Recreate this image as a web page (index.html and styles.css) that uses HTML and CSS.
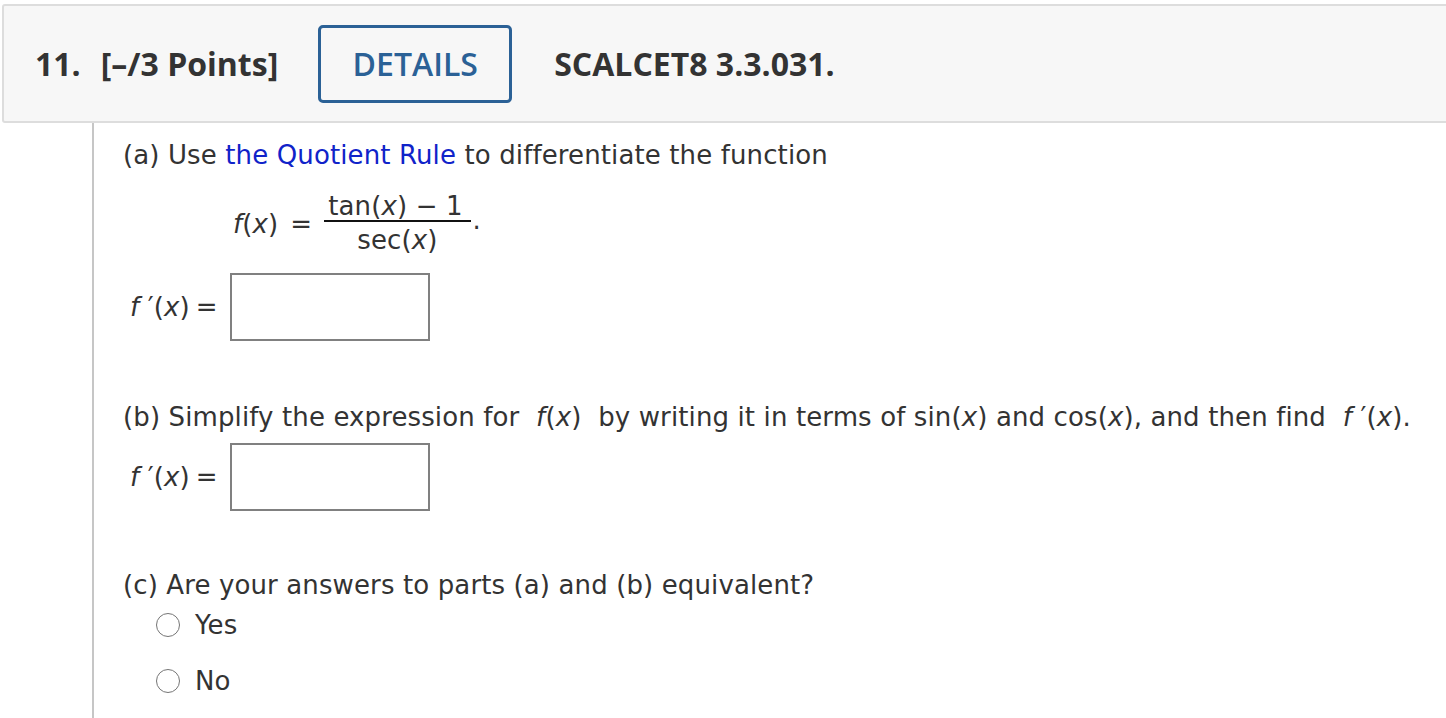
FILE: index.html
```html
<!DOCTYPE html>
<html>
<head>
<meta charset="utf-8">
<link rel="stylesheet" href="styles.css">
</head>
<body>
<div class="question">
  <div class="qhead">
    <span class="qnum">11.</span>
    <span class="qpts">[–/3 Points]</span>
    <span class="details">DETAILS</span>
    <span class="qid">SCALCET8 3.3.031.</span>
  </div>
  <div class="qbody">
    <p class="line line-a">(a) Use <span class="link">the Quotient Rule</span> to differentiate the function</p>
    <div class="eq">
      <span class="lhs"><i>f</i>(<i>x</i>)</span>
      <span class="op">=</span>
      <span class="frac"><span class="num">tan(<i>x</i>) − 1</span><span class="den">sec(<i>x</i>)</span></span><span class="dot">.</span>
    </div>
    <div class="answer answer-a">
      <span class="lab"><i>f</i> ′(<i>x</i>)</span><span class="op2">=</span><span class="box"></span>
    </div>
    <p class="line line-b">(b) Simplify the expression for&nbsp; <i>f</i>(<i>x</i>)&nbsp;&nbsp;by writing it in terms of sin(<i>x</i>) and cos(<i>x</i>), and then find&nbsp; <i>f</i> ′(<i>x</i>).</p>
    <div class="answer answer-b">
      <span class="lab"><i>f</i> ′(<i>x</i>)</span><span class="op2">=</span><span class="box"></span>
    </div>
    <p class="line line-c">(c) Are your answers to parts (a) and (b) equivalent?</p>
    <div class="opts">
      <div class="opt"><span class="radio"></span><span>Yes</span></div>
      <div class="opt"><span class="radio"></span><span>No</span></div>
    </div>
  </div>
</div>
</body>
</html>
```
FILE: styles.css
```css
html, body {
  margin: 0;
  padding: 0;
  background: #ffffff;
}
body {
  font-family: "DejaVu Sans", Verdana, sans-serif;
  color: #333333;
  overflow: hidden;
}
.question {
  padding-top: 4px;
  padding-left: 2px;
}
.qhead {
  display: flex;
  align-items: center;
  height: 115px;
  width: 1500px;
  background: #f7f7f7;
  border: 2px solid #dddddd;
  border-radius: 3px;
  padding-left: 31px;
  box-sizing: content-box;
  font-family: "Open Sans", sans-serif;
  font-weight: 700;
  font-stretch: 90%;
  font-size: 32px;
  color: #333333;
}
.qnum { margin-right: 20px; }
.qpts { margin-right: 40px; }
.details {
  display: flex;
  align-items: center;
  justify-content: center;
  width: 188px;
  height: 72px;
  border: 3px solid #2b6196;
  border-radius: 5px;
  color: #2b6196;
  font-weight: 600;
  margin-right: 42px;
}
.qbody {
  margin-left: 90px;
  border-left: 2px solid #c6c6c6;
  padding-left: 29px;
  height: 600px;
  font-size: 26px;
  letter-spacing: 0.12px;
}
.line { margin: 0; line-height: 34px; }
.line-a { padding-top: 15px; }
.link { color: #1023c9; }
.eq {
  display: flex;
  align-items: center;
  margin-left: 110px;
  margin-top: 20px;
}
.op { margin: 0 12px 0 12px; }
.frac {
  display: inline-flex;
  flex-direction: column;
  align-items: center;
}
.num {
  padding: 0 8px 0 4px;
  border-bottom: 2px solid #111;
  line-height: 28px;
}
.den { line-height: 30px; padding-top: 3px; }
.dot { align-self: center; margin-top: -8px; margin-left: 2px; }
.answer {
  display: flex;
  align-items: center;
  margin-left: 7px;
}
.answer-a { margin-top: 18px; }
.answer-b { margin-top: 9px; }
.op2 { margin: 0 12px 0 6px; }
.box {
  width: 196px;
  height: 64px;
  border: 2px solid #808080;
  background: #fff;
}
.line-b { margin-top: 59px; }
.line-c { margin-top: 57px; }
.opts { margin-left: 33px; margin-top: 6px; }
.opt {
  display: flex;
  align-items: center;
  height: 34px;
  margin-bottom: 22px;
}
.radio {
  width: 22px;
  height: 22px;
  border: 1.5px solid #757575;
  border-radius: 50%;
  margin-right: 15px;
  box-sizing: content-box;
}
```
